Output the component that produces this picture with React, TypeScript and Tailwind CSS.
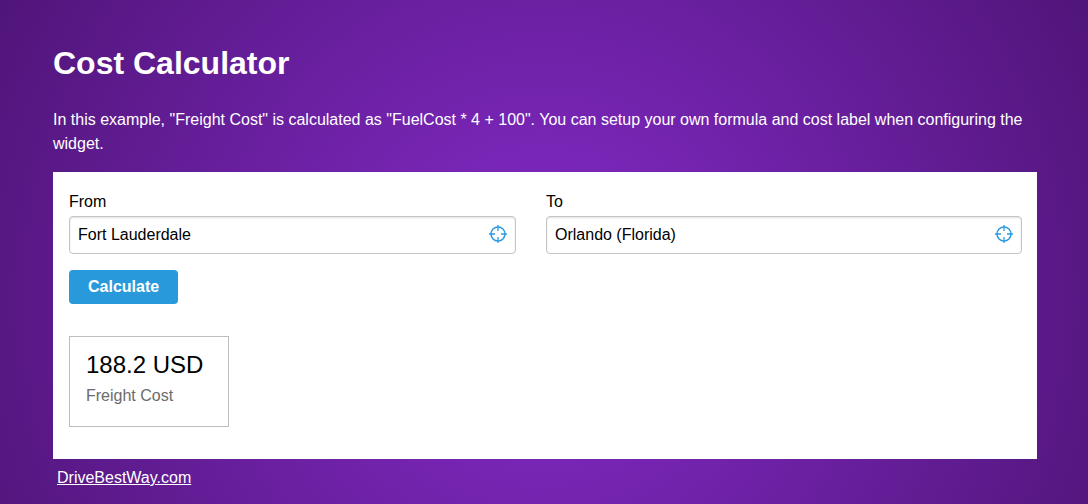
import { useState } from "react";

type PlaceFieldProps = {
  id: string;
  label: string;
  value: string;
  onChange: (value: string) => void;
};

function TargetIcon() {
  return (
    <svg viewBox="0 0 18 18" className="size-[18px]" fill="none" stroke="#2d9be0" aria-hidden="true">
      <circle cx="9" cy="9" r="7" strokeWidth="1.5" />
      <path d="M9 0V6M9 12V18M0 9H6M12 9H18" strokeWidth="1.3" />
    </svg>
  );
}

function PlaceField({ id, label, value, onChange }: PlaceFieldProps) {
  return (
    <div className="min-w-0">
      <label htmlFor={id} className="mb-[2px] block leading-6">
        {label}
      </label>
      <div className="flex h-[38px] items-center rounded border border-[#c4c4c4] bg-white pr-2 shadow-[inset_0_1px_2px_rgba(0,0,0,0.12)]">
        <input
          id={id}
          type="text"
          value={value}
          onChange={(event) => onChange(event.target.value)}
          className="h-full min-w-0 flex-1 bg-transparent px-2 outline-none"
        />
        <button type="button" className="pb-0.5" aria-label={`Use current location for ${label}`}>
          <TargetIcon />
        </button>
      </div>
    </div>
  );
}

export default function App() {
  const [from, setFrom] = useState("Fort Lauderdale");
  const [to, setTo] = useState("Orlando (Florida)");

  return (
    <main className="min-h-screen bg-[radial-gradient(circle_at_50%_60%,#852bc9,#501579)] pt-[39px] pr-[51px] pb-2 pl-[53px] font-['Liberation_Sans',Arial,sans-serif] text-base text-white">
      <h1 className="mb-[21px] text-[32px] leading-[48px] font-bold">Cost Calculator</h1>
      <p className="mb-4 leading-6">
        In this example, "Freight Cost" is calculated as "FuelCost * 4 + 100". You can setup your own formula and cost
        label when configuring the widget.
      </p>

      <section className="bg-white pt-[18px] pr-[15px] pb-8 pl-4 text-black">
        <form onSubmit={(event) => event.preventDefault()}>
          <div className="grid grid-cols-[447fr_476fr] gap-[30px]">
            <PlaceField id="from" label="From" value={from} onChange={setFrom} />
            <PlaceField id="to" label="To" value={to} onChange={setTo} />
          </div>
          <button type="submit" className="mt-4 block h-[34px] rounded bg-[#289adc] px-[19px] font-bold text-white">
            Calculate
          </button>
        </form>

        <div className="mt-8 w-40 border border-[#bdbdbd] px-4 pt-3 pb-[18px]">
          <div className="text-2xl leading-8">188.2 USD</div>
          <div className="mt-[3px] leading-6 text-[#6b6b6b]">Freight Cost</div>
        </div>
      </section>

      <a href="https://drivebestway.com" className="mt-[7px] ml-1 inline-block leading-6 underline">
        DriveBestWay.com
      </a>
    </main>
  );
}
